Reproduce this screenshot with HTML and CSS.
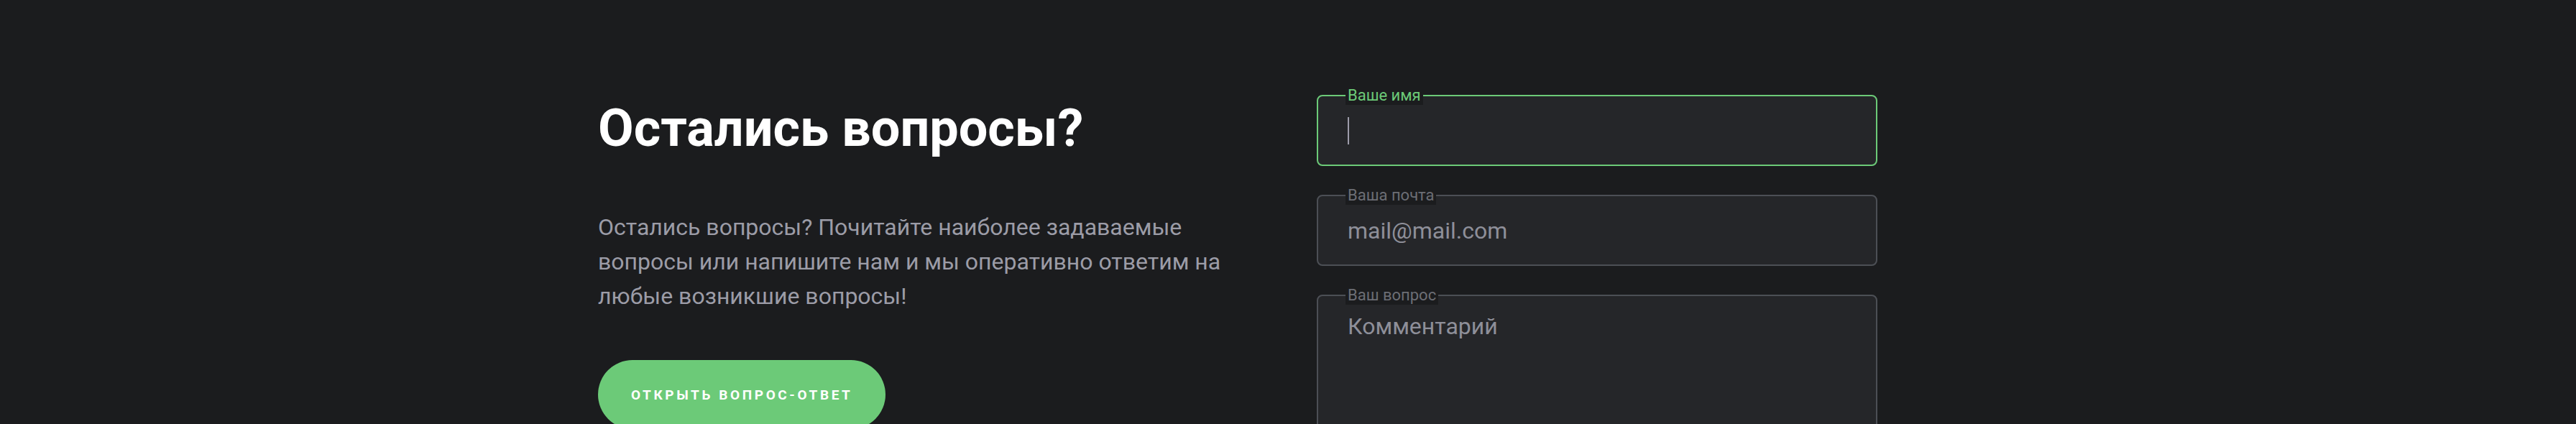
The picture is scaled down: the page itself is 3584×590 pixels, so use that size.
FILE: index.html
```html
<!DOCTYPE html>
<html lang="ru">
<head>
<meta charset="utf-8">
<title>Остались вопросы?</title>
<link rel="stylesheet" href="styles.css">
</head>
<body>
<section class="contact">
  <div class="contact__inner">
    <div class="contact__info">
      <h2 class="contact__title">Остались вопросы?</h2>
      <p class="contact__text">Остались вопросы? Почитайте наиболее задаваемые вопросы или напишите нам и мы оперативно ответим на любые возникшие вопросы!</p>
      <a class="btn" href="#">Открыть вопрос-ответ</a>
    </div>
    <form class="contact__form">
      <fieldset class="field field--active">
        <legend class="field__label">Ваше имя</legend>
        <div class="field__control">
          <input class="field__input" type="text" name="name">
          <span class="field__caret"></span>
        </div>
      </fieldset>
      <fieldset class="field">
        <legend class="field__label">Ваша почта</legend>
        <div class="field__control">
          <input class="field__input" type="email" name="email" placeholder="mail@mail.com">
        </div>
      </fieldset>
      <fieldset class="field">
        <legend class="field__label">Ваш вопрос</legend>
        <textarea class="field__textarea" name="question" placeholder="Комментарий"></textarea>
      </fieldset>
    </form>
  </div>
</section>
</body>
</html>
```

FILE: styles.css
```css
* { box-sizing: border-box; }

html, body {
  margin: 0;
  padding: 0;
  background: #1b1c1e;
  font-family: Roboto, "Noto Sans", Arial, sans-serif;
}

.contact {
  padding: 120px 0 120px;
}

.contact__inner {
  width: 1920px;
  margin: 0 auto;
  display: grid;
  grid-template-columns: 920px 780px;
  column-gap: 80px;
  align-items: start;
}

.contact__info {
  display: flex;
  flex-direction: column;
  align-items: flex-start;
  padding-top: 17px;
}

.contact__title {
  margin: 0;
  font-size: 72px;
  line-height: 84px;
  font-weight: 700;
  color: #ffffff;
}

.contact__text {
  margin: 71px 0 0;
  font-size: 32px;
  line-height: 48px;
  color: #9c9ca7;
}

.btn {
  margin-top: 65px;
  display: inline-flex;
  align-items: center;
  height: 96px;
  padding: 0 46px;
  border-radius: 48px;
  background: #6cca78;
  color: #ffffff;
  text-decoration: none;
  text-transform: uppercase;
  font-size: 19px;
  font-weight: 700;
  letter-spacing: 3.6px;
}

.contact__form {
  display: flex;
  flex-direction: column;
  gap: 28px;
}

.field {
  margin: 0;
  padding: 0 38px 11px;
  border: 2px solid #4c4f55;
  border-radius: 8px;
  background: #252629;
  min-width: 0;
}

.field--active {
  border-color: #6cca78;
}

.field__label {
  padding: 0 3px;
  font-size: 22px;
  line-height: 26px;
  color: #6c6e75;
  background: #1b1c1e;
}

.field--active .field__label {
  color: #6cca78;
}

.field__control {
  position: relative;
}

.field__input,
.field__textarea {
  display: block;
  width: 100%;
  border: none;
  outline: none;
  background: transparent;
  padding: 0 3px;
  font-family: Roboto, "Noto Sans", Arial, sans-serif;
  font-size: 32px;
  color: #d0d0d8;
}

.field__input {
  height: 72px;
}

.field__textarea {
  height: 190px;
  padding-top: 11px;
  resize: none;
  line-height: normal;
}

.field__input::placeholder,
.field__textarea::placeholder {
  color: #8e8f99;
  opacity: 1;
}

.field__caret {
  position: absolute;
  left: 3px;
  top: 17px;
  width: 2px;
  height: 38px;
  background: #9d9caa;
}
```
